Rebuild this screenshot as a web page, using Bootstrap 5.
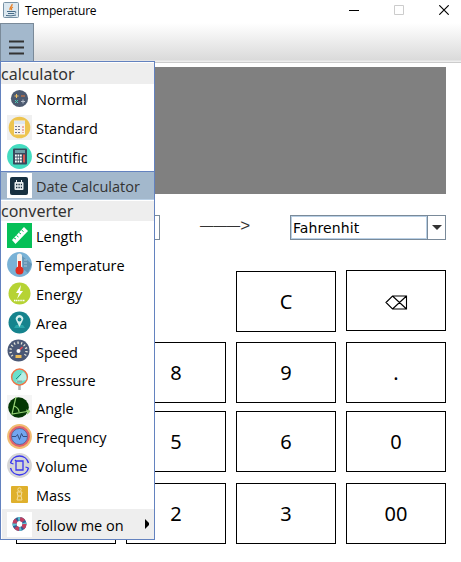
<!DOCTYPE html>
<html lang="en">
<head>
<meta charset="utf-8">
<title>Temperature</title>
<link href="https://cdn.jsdelivr.net/npm/bootstrap@5.3.0/dist/css/bootstrap.min.css" rel="stylesheet">
<style>
body{width:461px;height:562px;overflow:hidden;background:#fff;color:#000;font-family:"Noto Sans","Open Sans",sans-serif}
.titlebar{height:23px;padding:0 12px 3px 3px;font:12px/19px "Open Sans","Noto Sans",sans-serif}
.titlebar .caption{margin-left:6px;letter-spacing:-.18px}
.winbtns{gap:35px}
.menubar{height:40px;background:linear-gradient(#fff,#dadada 37px,#eee 38px,#eee 39px,#ccc 39px)}
.menu-toggle{width:34px;height:39px;background:#a3b8cc;border:1px solid #7a8a99;border-bottom:0;border-radius:0}
.workspace{padding:4px 15px 0 16px}
.display{height:127px;background:gray}
.units{height:25px;margin-top:21px;line-height:1}
.combo{border:1px solid #7a8a99;height:25px;background:#fff}
.combo-from{width:144px}
.combo-to{width:156px}
.combo-value{border:1px solid #b8cfe5;width:136px;padding-left:1px;font:14px/22px "DejaVu Sans",sans-serif;letter-spacing:.1px}
.combo-arrow{border-left:1px solid #7a8a99}
.direction{font:13.4px/22px "Liberation Sans",sans-serif;color:#333;margin-left:40px;width:90px}
.direction b{font-weight:400;font-size:17px}
.keys{display:grid;grid-template-columns:repeat(4,100px);grid-template-rows:62px 61px 61px 61px;column-gap:10px;row-gap:0;margin-top:30px}
.keyrow{display:contents}
.key{border:1px solid #000;border-radius:0;background:#fff;height:61px;padding:0;font-size:20px;line-height:59px;color:#000}
.keys{grid-template-rows:72px 69px 72px 61px}
.key-clear{margin-top:1px}
.popup{left:0;top:61px;width:155px;height:479px;border:1px solid #6382bf;background:#fff;z-index:5}
.popup .head{height:22px;background:#eee;border-top:1px solid #fff;font-size:16px;line-height:22px;color:#333}
.popup .head2{height:21px;line-height:20px}
.entry{height:29px;padding-left:6px;font:14.5px/29px "Open Sans","Noto Sans",sans-serif;color:#000}
.entry svg{width:25px;height:25px;flex:none}
.entry span{margin-left:4px;white-space:nowrap;position:relative;top:1px}
.entry.short{height:28px}
.entry.active-row{background:#a3b8cc;border-top:1px solid #6382bf;border-bottom:1px solid #b8cfe5;color:#333}
.entry.sub{height:30px;background:#eee;margin-left:1px;padding-left:5px}
.entry.sub .caret{width:4px;height:10px;margin:0 5px 0 auto}
</style>
<script src="https://cdn.jsdelivr.net/npm/bootstrap@5.3.0/dist/js/bootstrap.bundle.min.js"></script>
</head>
<body class="position-relative">
<header class="titlebar d-flex align-items-center">
<svg width="16" height="16" viewBox="0 0 16 16"><rect x=".5" y=".5" width="15" height="15" rx="1" fill="#dce8f0" stroke="#7892a5"/><path d="M9 2C10 4 6 5 7 8M10 5C8 6 8 7 9 8" fill="none" stroke="#e87c20" stroke-width="1.3"/><path d="M4 9.500h7M5 11.500h6M3 13.500q5 1 10-.5M11 9.500q3-.5 1 2" fill="none" stroke="#476b87"/></svg>
<span class="caption">Temperature</span>
<div class="winbtns d-flex ms-auto align-items-center">
<svg width="10" height="10"><path d="M0 5.500h10" stroke="#000"/></svg>
<svg width="10" height="10"><path d="M.5.500h9v9h-9z" fill="none" stroke="#ccc"/></svg>
<svg width="10" height="10"><path d="M.3.300l9.400 9.400M9.700.300L.3 9.700" stroke="#000" stroke-width="1.150"/></svg>
</div>
</header>
<nav class="menubar">
<button class="menu-toggle btn p-0 d-block" aria-label="Menu"><svg class="d-block" width="32" height="37"><path d="M8 16.500h15M8 22.500h15M8 28.500h15" stroke="#333" stroke-width="1.800"/></svg></button>
</nav>
<main class="workspace">
<div class="display"></div>
<div class="units d-flex">
<div class="combo combo-from"></div>
<div class="direction d-flex"><span>———</span><b>&gt;</b></div>
<div class="combo combo-to d-flex"><div class="combo-value">Fahrenhit</div><div class="combo-arrow flex-fill d-flex align-items-center justify-content-center"><svg width="10" height="5"><path d="M0 0h10L5 5z" fill="#333"/></svg></div></div>
</div>
<div class="keys">
<span></span><span></span><button class="key key-clear">C</button><button class="key"><svg width="23" height="15" viewBox="0 0 23 15"><path d="M1 7.500L7.500 1H21.500V14H7.500zM7.500 1l14 13M7.500 14l14-13" fill="none" stroke="#000" stroke-width="1.100"/></svg></button>
<button class="key"></button><button class="key">8</button><button class="key">9</button><button class="key">.</button>
<button class="key"></button><button class="key">5</button><button class="key">6</button><button class="key">0</button>
<button class="key"></button><button class="key">2</button><button class="key">3</button><button class="key">00</button>
</div>
</main>
<aside class="popup position-absolute">
<div class="head">calculator</div>
<div class="entry d-flex align-items-center"><svg viewBox="0 0 25 25"><circle cx="12.500" cy="12.500" r="8.600" fill="#4c5a70"/><path d="M7.500 10h4M9.500 8v4" stroke="#f0c060"/><path d="M14 10h4" stroke="#e57838"/><path d="M8 14l3 3M11 14l-3 3" stroke="#4cc9b0"/><path d="M14 15.500h4M16 13.500v4" stroke="#b8c0cc"/></svg><span>Normal</span></div>
<div class="entry d-flex align-items-center"><svg viewBox="0 0 25 25"><path d="M0 0h25v25H0z" fill="#f0f0f0"/><circle cx="12.500" cy="12.500" r="10.800" fill="#edc44f"/><path d="M7 5.500h11v14H7z" fill="#f6f2ee"/><path d="M7 6h11v3H7z" fill="#dce6f0"/><path d="M8 11.500h6M8 14.500h6M8 17.500h6" stroke="#70758c" stroke-dasharray="2 1"/><path d="M16 11v7" stroke="#e06a5a" stroke-dasharray="2 1"/></svg><span>Standard</span></div>
<div class="entry d-flex align-items-center"><svg viewBox="0 0 25 25"><circle cx="12.500" cy="12.500" r="12.400" fill="#44dcc0"/><rect x="6" y="4.500" width="14" height="16" rx="1" fill="#384a5c"/><path d="M8 6h10v3H8z" fill="#6fa0a8"/><path d="M8 11.500h7M8 14.500h7M8 17.500h7" stroke="#fff" stroke-width="1.800" stroke-dasharray="1.800 .7"/><path d="M17 10.500v8" stroke="#ee5b50" stroke-width="1.800"/></svg><span>Scintific</span></div>
<div class="entry active-row d-flex align-items-center"><svg viewBox="0 0 25 25"><path d="M0 0h25v25H0z" fill="#fff"/><rect x="3" y="4" width="18" height="18" rx="2" fill="#173040"/><rect x="7.500" y="9" width="9" height="8" rx="1" fill="#e8eef0"/><path d="M9.500 7v3M14.500 7v3" stroke="#e8eef0"/><path d="M9 11.500h6M9 14.500h6" stroke="#173040" stroke-width="1.300" stroke-dasharray="1.400 1"/></svg><span>Date Calculator</span></div>
<div class="head head2">converter</div>
<div class="entry d-flex align-items-center"><svg viewBox="0 0 25 25"><path d="M0 0h25v25H0z" fill="#05c057"/><path d="M5 17L17 4l4 4L8.500 21z" fill="#fff"/><path d="M7 15l2 1M9.500 12.500l2 1.500M12 9.500l2 1.500M14.500 7l2 1.500" stroke="#05c057"/></svg><span>Length</span></div>
<div class="entry d-flex align-items-center"><svg viewBox="0 0 25 25"><circle cx="12.500" cy="12.500" r="12.400" fill="#79b2d6"/><path d="M15 4l10 8-4 9-5-4z" fill="#6495b5"/><path d="M12.500 4v14" stroke="#f3f1ed" stroke-width="5" stroke-linecap="round"/><path d="M12.500 9v9" stroke="#e22d20" stroke-width="3"/><circle cx="12.500" cy="18.500" r="4" fill="#e22d20"/><path d="M17 8h3M17 11h3M17 14h3" stroke="#dce9ef" stroke-width=".6"/></svg><span>Temperature</span></div>
<div class="entry d-flex align-items-center"><svg viewBox="0 0 25 25"><circle cx="12.500" cy="12.500" r="11" fill="#b6d334"/><path d="M14 4L9 12h3l-2 6 6-8h-3z" fill="#fff"/><path d="M7 19.500h11" stroke="#fff" stroke-width="1.400" stroke-dasharray="1.300 .5"/></svg><span>Energy</span></div>
<div class="entry d-flex align-items-center"><svg viewBox="0 0 25 25"><circle cx="12.500" cy="12.500" r="11" fill="#15838d"/><path d="M9 15l-2 3h11l-2-3" fill="#2aa5a9"/><path d="M12.500 17L9.500 11a3.700 3.700 0 1 1 6 0z" fill="#d9f1ef"/><circle cx="12.500" cy="9.500" r="1.900" fill="#15838d"/></svg><span>Area</span></div>
<div class="entry short d-flex align-items-center"><svg viewBox="0 0 25 25"><circle cx="11.500" cy="11.500" r="11" fill="#4a5876"/><path d="M5.500 17A8 8 0 1 1 17.500 17" fill="none" stroke="#e5e5d9" stroke-width="2.400" stroke-dasharray="1.200 2.200"/><path d="M11.500 12l4-4" stroke="#e34b52" stroke-width="1.600"/><circle cx="11.500" cy="12" r="2" fill="#fff"/><path d="M8.500 16h6v3h-6z" fill="#edbd57"/></svg><span>Speed</span></div>
<div class="entry short d-flex align-items-center"><svg viewBox="0 0 25 25"><path d="M12.500 18v5" stroke="#b4b4b4" stroke-width="2.600"/><circle cx="12.500" cy="10" r="7.900" fill="#6be0cc" stroke="#ee7448" stroke-width="1.500"/><path d="M9 15l7-10A7 7 0 0 1 19 13z" fill="#b9eee5"/><path d="M9 12l5-5" stroke="#278e84"/><path d="M10 13.500h5v2h-5z" fill="#8faaa9"/></svg><span>Pressure</span></div>
<div class="entry d-flex align-items-center"><svg viewBox="0 0 25 25"><path d="M0 0h25v25H0z" fill="#f5f5f5"/><circle cx="11.500" cy="12.500" r="10.300" fill="#033603"/><path d="M9 2L5 19l18-3M7 11q5 2 5 6M23 16l-4-1M23 16l-3 3" fill="none" stroke="#95d174" stroke-width="1.200"/></svg><span>Angle</span></div>
<div class="entry d-flex align-items-center"><svg viewBox="0 0 25 25"><circle cx="12.500" cy="12.500" r="12.400" fill="#f1bd73"/><circle cx="12.500" cy="12.500" r="9.200" fill="#72a6ef" stroke="#e1626c" stroke-width="2.400"/><circle cx="12.500" cy="12.500" r="8" fill="none" stroke="#4b5787" stroke-width=".7"/><path d="M5 12.500h4l1.500-2 2 5 2-6 1.500 3h4" fill="none" stroke="#344f82"/></svg><span>Frequency</span></div>
<div class="entry d-flex align-items-center"><svg viewBox="0 0 25 25"><circle cx="12.500" cy="12.500" r="12.400" fill="#d6d6d6"/><path d="M3.500 10a9.300 9.300 0 0 1 18 0M3.500 15a9.300 9.300 0 0 0 18 0" fill="none" stroke="#3936f0" stroke-width="1.400"/><path d="M9 8h7v9H9zM9 8l-1-1M3.500 10l3 1M21.500 15l-3-1" fill="none" stroke="#3936f0" stroke-width="1.300"/></svg><span>Volume</span></div>
<div class="entry d-flex align-items-center"><svg viewBox="0 0 25 25"><rect x="4" y="4" width="17" height="17" rx="1" fill="#dfb02c"/><circle cx="12.500" cy="7.500" r="1.700" fill="none" stroke="#f5dfa0"/><path d="M10 10h5l-1 4h-3zM11 14l-1 4h5l-1-4" fill="none" stroke="#f5dfa0"/></svg><span>Mass</span></div>
<div class="entry sub d-flex align-items-center"><svg viewBox="0 0 25 25"><path d="M0 0h25v25H0z" fill="#fff"/><g fill="none" stroke-width="4"><circle cx="12.500" cy="12" r="5" stroke="#315f96"/><circle cx="12.500" cy="12" r="5" stroke="#c13f60" stroke-dasharray="4 3.850"/><circle cx="12.500" cy="12" r="5" stroke="#5fbfd0" stroke-dasharray="2 5.850" stroke-dashoffset="2"/></g></svg><span>follow me on</span><svg class="caret" viewBox="0 0 4 10"><path d="M0 0l4 4v2L0 10z"/></svg></div>
</aside>
</body>
</html>
